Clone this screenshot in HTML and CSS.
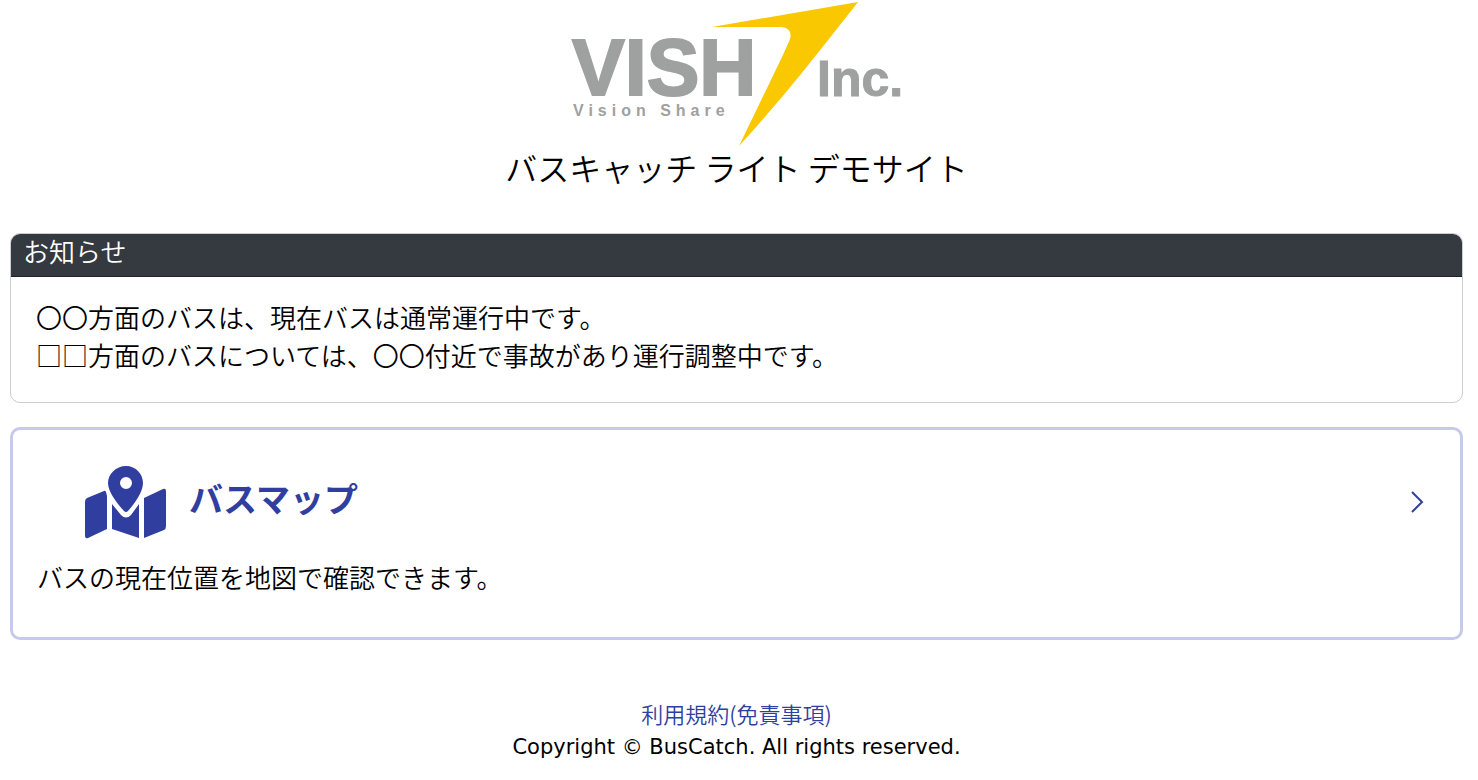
FILE: index.html
```
<!DOCTYPE html>
<html lang="ja">
<head>
    <meta charset="UTF-8">
    <meta name="viewport" content="width=device-width, initial-scale=1.0">
    <title>バスキャッチ ライト デモサイト</title>
    <link rel="stylesheet" href="styles.css">
</head>
<body>
    <header class="site-header">
        <svg class="logo" viewBox="0 0 332 146" role="img" aria-label="VISH Inc. Vision Share">
            <text class="logo-name" x="1" y="95">VISH</text>
            <text class="logo-inc" x="246" y="96">Inc.</text>
            <text class="logo-sub" x="2" y="116">Vision Share</text>
            <path fill="#fac800" d="M287 2 L141 27 L211 27 Q222 29 219 39 Q217 44 211 57 L168 146 Q200 111 230 74 Q255 43 287 2 Z"/>
        </svg>
        <h1>バスキャッチ ライト デモサイト</h1>
    </header>

    <main>
        <section class="news">
            <h2>お知らせ</h2>
            <div class="news-body">
                <p>〇〇方面のバスは、現在バスは通常運行中です。</p>
                <p>□□方面のバスについては、〇〇付近で事故があり運行調整中です。</p>
            </div>
        </section>

        <a class="menu-card" href="#map">
            <div class="menu-title">
                <svg class="map-icon" viewBox="0 0 82 74" aria-hidden="true">
                    <path fill-rule="evenodd" d="M41 1 C51 1 58 9 58 18 C58 27 50 38 43 46 Q41 48 39 46 C32 38 23 27 23 18 C23 9 31 1 41 1 Z M41 12 A6 6 0 1 0 41 24 A6 6 0 1 0 41 12 Z"/>
                    <path d="M2 33 L19 26 Q20 25 21 27 L22 31 V64 L3 73 Q0 74 0 70 V37 Q0 34 2 33 Z"/>
                    <path d="M27 39 L36 50 Q41 55 46 50 L54 39 V73 L27 64 Z"/>
                    <path d="M59 33 L78 24 Q81 23 81 26 V61 Q81 64 79 65 L59 73 Z"/>
                </svg>
                <h2>バスマップ</h2>
                <svg class="arrow" viewBox="0 0 14 24" aria-hidden="true">
                    <path d="M2 2 L12 12 L2 22"/>
                </svg>
            </div>
            <p>バスの現在位置を地図で確認できます。</p>
        </a>
    </main>

    <footer>
        <a href="#terms">利用規約(免責事項)</a>
        <p>Copyright © BusCatch. All rights reserved.</p>
    </footer>
</body>
</html>
```

FILE: styles.css
```
* {
    box-sizing: border-box;
    margin: 0;
    padding: 0;
}

body {
    background-color: #fff;
    color: #000;
    font-family: "Noto Sans CJK JP", sans-serif;
    font-size: 26px;
    font-weight: 350;
    line-height: 38px;
    padding: 0 15px 0 10px;
}

a {
    color: #303f9f;
    text-decoration: none;
}

.site-header {
    text-align: center;
    margin-bottom: 44px;
}

/* Logo */
.logo {
    display: block;
    width: 332px;
    height: 146px;
    margin: 0 auto;
}

.logo text {
    font-family: "Liberation Sans", sans-serif;
    font-weight: bold;
    fill: #9fa0a0;
}

.logo .logo-name {
    font-size: 79px;
    stroke: #9fa0a0;
    stroke-width: 2;
}

.logo .logo-inc {
    font-size: 50px;
    stroke: #9fa0a0;
    stroke-width: 1;
}

.logo .logo-sub {
    font-size: 16px;
    letter-spacing: 5px;
}

h1 {
    font-size: 32px;
    font-weight: 350;
    line-height: 43px;
}

/* News */
.news {
    border: 1px solid #ccc;
    border-radius: 10px;
    overflow: hidden;
    margin-bottom: 24px;
}

.news h2 {
    background-color: #343a40;
    border-bottom: 1px solid #222;
    color: #fff;
    font-size: 26px;
    font-weight: 350;
    line-height: 34px;
    padding: 0 12px 8px;
}

.news-body {
    padding: 21px 25px 28px;
}

/* Menu */
.menu-card {
    display: block;
    border: 3px solid #c5cae9;
    border-radius: 10px;
    padding: 32px 24px 41px;
}

.menu-card p {
    color: #000;
    margin-top: 19px;
}

.menu-title {
    display: flex;
    align-items: center;
    gap: 22px;
    padding: 3px 12px 0 48px;
}

.menu-title h2 {
    flex: 1;
    font-size: 34px;
    font-weight: bold;
    line-height: 48px;
    padding-bottom: 8px;
}

.map-icon {
    width: 82px;
    height: 74px;
    fill: #303f9f;
}

.arrow {
    width: 14px;
    height: 24px;
    fill: none;
    stroke: #303f9f;
    stroke-width: 2;
}

footer {
    font-size: 22px;
    line-height: 34px;
    text-align: center;
    margin-top: 56px;
}

footer p {
    font-family: "DejaVu Sans", sans-serif;
    font-size: 21px;
    font-weight: normal;
}
```
